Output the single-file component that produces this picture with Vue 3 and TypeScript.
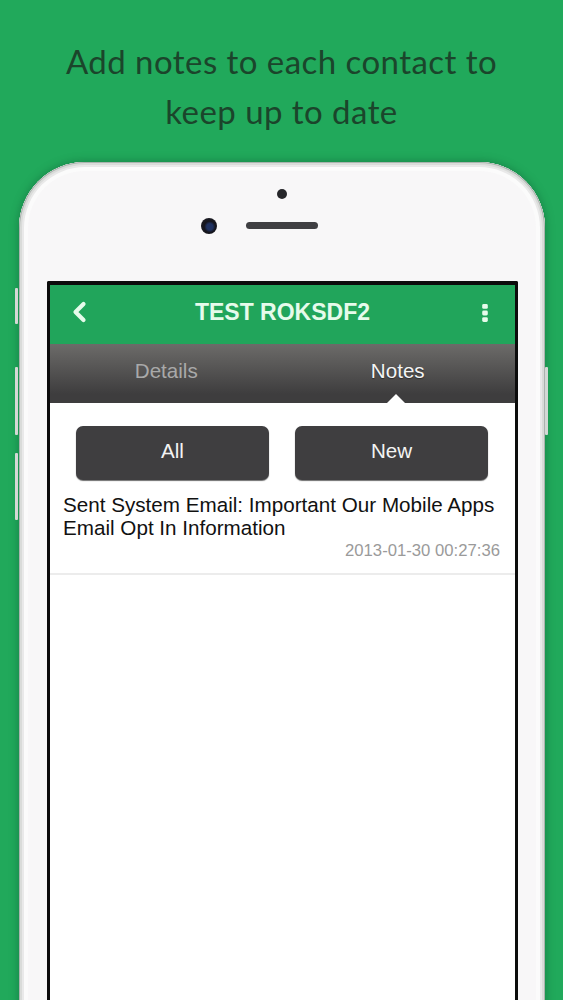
<script setup lang="ts">
const tabs = [
  { label: 'Details', active: false },
  { label: 'Notes', active: true },
]
const filters = ['All', 'New']
</script>

<template>
  <main class="page">
    <h1 class="headline">Add notes to each contact to<br />keep up to date</h1>
    <section class="phone">
      <i class="key key-mute"></i>
      <i class="key key-up"></i>
      <i class="key key-down"></i>
      <i class="key key-power"></i>
      <div class="sensors">
        <span class="dot"></span>
        <div class="sensor-row">
          <span class="camera"></span>
          <span class="speaker"></span>
        </div>
      </div>
      <div class="screen">
        <header class="appbar">
          <svg class="back" viewBox="0 0 16 22" aria-hidden="true">
            <path d="M12.5 3 L4.5 11 L12.5 19" fill="none" stroke="currentColor" stroke-width="4.2" stroke-linecap="round" stroke-linejoin="round" />
          </svg>
          <span class="title">TEST ROKSDF2</span>
          <svg class="more" viewBox="0 0 6 18" aria-hidden="true">
            <rect x="0.2" y="0" width="5.6" height="4.8" rx="1.4" fill="currentColor" />
            <rect x="0.2" y="6.6" width="5.6" height="4.8" rx="1.4" fill="currentColor" />
            <rect x="0.2" y="13.2" width="5.6" height="4.8" rx="1.4" fill="currentColor" />
          </svg>
        </header>
        <nav class="tabs">
          <div v-for="tab in tabs" :key="tab.label" class="tab" :class="{ active: tab.active }">{{ tab.label }}</div>
        </nav>
        <div class="filters">
          <button v-for="f in filters" :key="f" class="filter" type="button">{{ f }}</button>
        </div>
        <article class="note">
          <p class="note-text">Sent System Email: Important Our Mobile Apps Email Opt In Information</p>
          <time class="note-time">2013-01-30 00:27:36</time>
        </article>
      </div>
    </section>
  </main>
</template>

<style>
html, body { margin: 0; background: #21a95b; }
</style>

<style scoped>
.page {
  width: 563px;
  height: 1000px;
  overflow: hidden;
  background: #21a95b;
  box-sizing: border-box;
  padding-top: 36px;
}
.headline {
  margin: 0;
  height: 126px;
  font: 400 33px/50px Lato, sans-serif;
  letter-spacing: 0.45px;
  color: #1b452b;
  text-align: center;
}
.phone {
  position: relative;
  box-sizing: border-box;
  width: 526px;
  height: 900px;
  margin-left: 19px;
  padding: 0 27px 0 28px;
  background: #f8f7f8;
  border-radius: 66px 66px 0 0;
  box-shadow:
    inset 0 0 0 1px #aab3ae,
    inset 0 0 0 3px #d9dbd9,
    inset 0 0 0 5px #e9e9e9,
    inset 0 0 0 9px #fbfbfb,
    0 0 8px 1px rgba(10, 70, 40, 0.35);
}
.key {
  position: absolute;
  width: 3px;
  background: #d4d8d5;
  border-radius: 1px;
}
.key-mute { left: -4px; top: 126px; height: 36px; }
.key-up { left: -4px; top: 205px; height: 68px; }
.key-down { left: -4px; top: 291px; height: 67px; }
.key-power { right: -3px; top: 205px; height: 68px; }
.sensors {
  height: 119px;
  display: flex;
  flex-direction: column;
  align-items: center;
  padding-top: 27px;
  box-sizing: border-box;
}
.dot {
  width: 10px;
  height: 10px;
  border-radius: 50%;
  background: #26262a;
  margin-left: -1px;
}
.sensor-row {
  position: relative;
  margin-top: 20px;
  display: flex;
  justify-content: center;
  margin-left: -1px;
}
.speaker {
  width: 72px;
  height: 7px;
  border-radius: 4px;
  background: #3f3f42;
  margin-top: 3px;
}
.camera {
  position: absolute;
  left: -45px;
  top: -1px;
  width: 16px;
  height: 16px;
  border-radius: 50%;
  background: radial-gradient(circle at 55% 55%, #1f3160 0 25%, #14141c 45%, #23232a 100%);
}
.screen {
  box-sizing: border-box;
  height: 790px;
  background: #fff;
  border: solid #0c0c0c;
  border-width: 4px 3px 0;
  border-radius: 2px 2px 0 0;
  font-family: "Liberation Sans", Arial, sans-serif;
}
.appbar {
  box-sizing: border-box;
  height: 59px;
  background: #21a55b;
  color: #e6fbeb;
  display: flex;
  align-items: center;
  justify-content: space-between;
  padding: 0 27px 5px 21px;
}
.back { width: 16px; height: 22px; }
.more { width: 6px; height: 18px; margin-top: 1px; }
.title {
  font-size: 23px;
  font-weight: 700;
  line-height: 1;
  margin-left: -4px;
}
.tabs {
  height: 59px;
  display: grid;
  grid-template-columns: 1fr 1fr;
  background: linear-gradient(#6c6b69, #3e3d3e 85%);
}
.tab {
  position: relative;
  display: flex;
  align-items: center;
  justify-content: center;
  font-size: 20.6px;
  color: #a9a9a9;
  padding-bottom: 5px;
  box-sizing: border-box;
}
.tab.active {
  color: #f4f4f4;
  left: -1px;
  text-shadow: 0 1px 1px #2c2c2c;
}
.tab.active::after {
  content: "";
  position: absolute;
  bottom: 0;
  left: 50%;
  margin-left: -11px;
  border-style: solid;
  border-width: 0 9px 9px;
  border-color: transparent transparent #fff;
}
.filters {
  display: flex;
  gap: 26px;
  padding: 23px 27px 0 26px;
}
.filter {
  flex: 1;
  height: 54px;
  border: 0;
  border-radius: 7px;
  background: #3f3e40;
  box-shadow: 0 1px 1px #6f6f6f;
  color: #f3f3f3;
  font: 400 20.6px "Liberation Sans", Arial, sans-serif;
  padding: 0 0 4px;
}
.note {
  margin-top: 13px;
  padding: 0 15px 11px 13px;
  border-bottom: 2px solid #ececec;
  display: flex;
  flex-direction: column;
}
.note-text {
  margin: 0;
  font-size: 20.65px;
  line-height: 23px;
  color: #111;
}
.note-time {
  align-self: flex-end;
  font-size: 16.7px;
  line-height: 23px;
  color: #9a9a9a;
}
</style>
